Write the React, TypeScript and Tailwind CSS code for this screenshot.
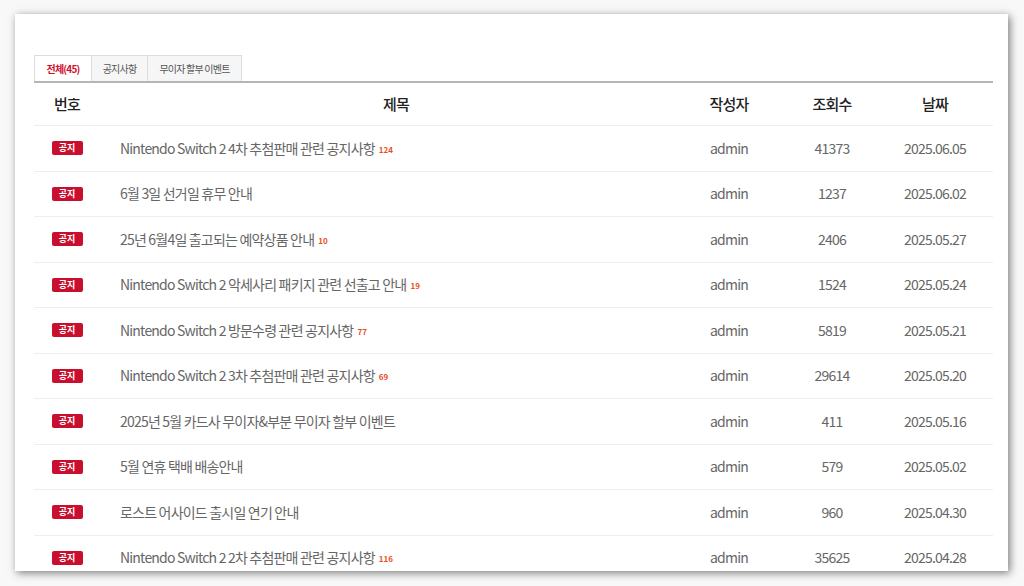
import React from 'react';

const rows = [
  { title: 'Nintendo Switch 2 4차 추첨판매 관련 공지사항', count: 124, views: 41373, date: '2025.06.05' },
  { title: '6월 3일 선거일 휴무 안내', views: 1237, date: '2025.06.02' },
  { title: '25년 6월4일 출고되는 예약상품 안내', count: 10, views: 2406, date: '2025.05.27' },
  { title: 'Nintendo Switch 2 악세사리 패키지 관련 선출고 안내', count: 19, views: 1524, date: '2025.05.24' },
  { title: 'Nintendo Switch 2 방문수령 관련 공지사항', count: 77, views: 5819, date: '2025.05.21' },
  { title: 'Nintendo Switch 2 3차 추첨판매 관련 공지사항', count: 69, views: 29614, date: '2025.05.20' },
  { title: '2025년 5월 카드사 무이자&부분 무이자 할부 이벤트', views: 411, date: '2025.05.16' },
  { title: '5월 연휴 택배 배송안내', views: 579, date: '2025.05.02' },
  { title: '로스트 어사이드 출시일 연기 안내', views: 960, date: '2025.04.30' },
  { title: 'Nintendo Switch 2 2차 추첨판매 관련 공지사항', count: 116, views: 35625, date: '2025.04.28' },
];

const tabs = [
  { label: '전체(45)', width: 'w-[58px]', active: true },
  { label: '공지사항', width: 'w-[56px]', active: false },
  { label: '무이자 할부 이벤트', width: 'w-[94px]', active: false },
];

const grid = 'grid grid-cols-[66px_592px_74px_132px_74px_21px] items-center';

export default function App() {
  return (
    <div
      className="w-[1024px] h-[586px] bg-[#f8f8f8] pt-[14px] pl-[15px] overflow-hidden tracking-[-0.05em]"
      style={{ fontFamily: '"Noto Sans CJK KR", "Noto Sans", sans-serif' }}
    >
      <div className="w-[993px] h-[557px] bg-white shadow-[2px_2px_8px_rgba(0,0,0,0.5)] pt-[41px] pl-[19px] overflow-hidden">
        <div className="w-[959px]">
          {/* tabs */}
          <div className="flex h-[28px] border-b-2 border-[#b5b5b5]">
            {tabs.map((t) => (
              <div
                key={t.label}
                className={
                  t.width +
                  ' h-full flex items-center justify-center border-t border-r border-[#dddddd] first:border-l text-[10px] ' +
                  (t.active ? 'bg-white text-[#d0102e] font-bold' : 'bg-[#f6f6f6] text-[#555555]')
                }
              >
                {t.label}
              </div>
            ))}
          </div>

          {/* header */}
          <div className={grid + ' h-[43px] border-b border-[#eeeeee] text-[15px] font-medium text-[#222222]'}>
            <div className="text-center">번호</div>
            <div className="text-center">제목</div>
            <div className="text-center">작성자</div>
            <div className="text-center">조회수</div>
            <div className="text-center">날짜</div>
            <div />
          </div>

          {/* rows */}
          {rows.map((r, i) => (
            <div key={i} className={grid + ' h-[45.5px] border-b border-[#eeeeee] text-[14px] text-[#666666]'}>
              <div className="flex justify-center">
                <span className="w-[31px] h-[14px] rounded-[2px] bg-[#c8102e] text-white text-[9px] font-bold tracking-normal leading-[14px] text-center">
                  공지
                </span>
              </div>
              <div className="pl-[20px] flex items-center whitespace-nowrap">
                <span>{r.title}</span>
                {r.count !== undefined && (
                  <span className="ml-[4px] mt-[3px] text-[8px] font-bold tracking-normal text-[#e8501e]">{r.count}</span>
                )}
              </div>
              <div className="text-center">admin</div>
              <div className="text-center">{r.views}</div>
              <div className="text-center">{r.date}</div>
              <div />
            </div>
          ))}
        </div>
      </div>
    </div>
  );
}
